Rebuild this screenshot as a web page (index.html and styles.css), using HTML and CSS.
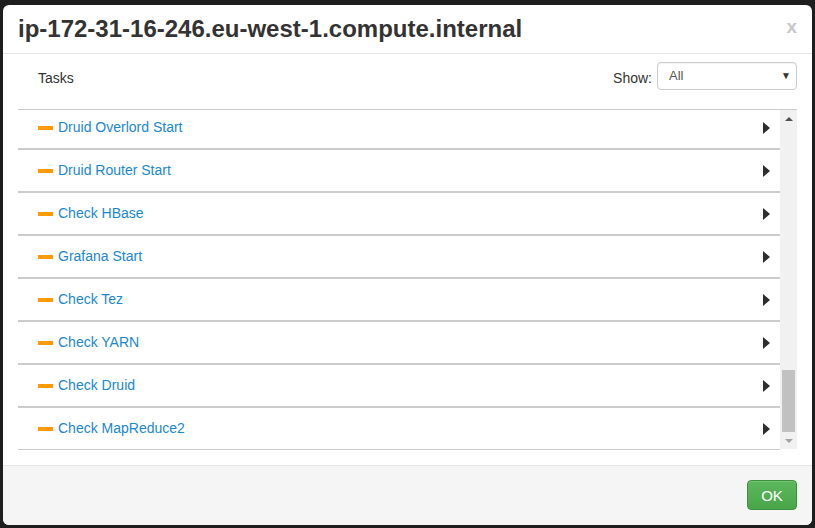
FILE: index.html
```html
<!DOCTYPE html>
<html lang="en">
<head>
<meta charset="utf-8">
<title>Host tasks</title>
<link rel="stylesheet" href="styles.css">
</head>
<body>
<div class="modal">
  <div class="modal-header">
    <h4 class="modal-title">ip-172-31-16-246.eu-west-1.compute.internal</h4>
    <span class="close">x</span>
  </div>
  <div class="modal-body">
    <div class="toolbar">
      <span class="tasks-label">Tasks</span>
      <div class="filter">
        <span class="show-label">Show:</span>
        <div class="select"><span>All</span><span class="caret">&#9660;</span></div>
      </div>
    </div>
    <div class="list-wrap">
      <div class="list">
        <div class="row"><span class="dash"></span><a class="name">Druid Overlord Start</a><span class="arrow"></span></div>
        <div class="row"><span class="dash"></span><a class="name">Druid Router Start</a><span class="arrow"></span></div>
        <div class="row"><span class="dash"></span><a class="name">Check HBase</a><span class="arrow"></span></div>
        <div class="row"><span class="dash"></span><a class="name">Grafana Start</a><span class="arrow"></span></div>
        <div class="row"><span class="dash"></span><a class="name">Check Tez</a><span class="arrow"></span></div>
        <div class="row"><span class="dash"></span><a class="name">Check YARN</a><span class="arrow"></span></div>
        <div class="row"><span class="dash"></span><a class="name">Check Druid</a><span class="arrow"></span></div>
        <div class="row"><span class="dash"></span><a class="name">Check MapReduce2</a><span class="arrow"></span></div>
      </div>
      <div class="scrollbar">
        <div class="sb-btn"><span class="sb-up"></span></div>
        <div class="sb-track"><div class="sb-thumb"></div></div>
        <div class="sb-btn"><span class="sb-down"></span></div>
      </div>
    </div>
  </div>
  <div class="modal-footer">
    <button class="btn-ok">OK</button>
  </div>
</div>
</body>
</html>
```

FILE: styles.css
```css
* { box-sizing: border-box; }
html, body { height: 100%; }
body {
  margin: 0;
  padding: 5px 3px 3px 3px;
  background: #1e1e1e;
  font-family: "Liberation Sans", Arial, sans-serif;
  font-size: 14px;
  color: #333;
}
.modal {
  background: #fff;
  border-radius: 6px;
  height: 520px;
  display: flex;
  flex-direction: column;
  overflow: hidden;
}
.modal-header {
  display: flex;
  justify-content: space-between;
  align-items: center;
  padding: 10px 15px 11px 15px;
  border-bottom: 1px solid #e5e5e5;
}
.modal-title {
  margin: 0;
  font-size: 24px;
  font-weight: bold;
  line-height: 27px;
  color: #333;
}
.close {
  font-size: 19px;
  font-weight: bold;
  color: #c8c8c8;
  line-height: 20px;
  padding-bottom: 4px;
}
.modal-body {
  flex: 1;
  padding: 8px 15px 15px 15px;
  display: flex;
  flex-direction: column;
}
.toolbar {
  display: flex;
  justify-content: space-between;
  align-items: center;
  padding: 0 0 19px 20px;
  border-bottom: 1px solid #ccc;
}
.tasks-label { font-size: 14px; padding-top: 4px; }
.filter { display: flex; align-items: center; gap: 5px; }
.show-label { font-size: 14px; padding-top: 4px; }
.select {
  width: 140px;
  height: 28px;
  border: 1px solid #ccc;
  border-radius: 4px;
  display: flex;
  justify-content: space-between;
  align-items: center;
  padding: 0 5px 2px 11px;
  color: #555;
  font-size: 13px;
  box-shadow: inset 0 1px 1px rgba(0,0,0,0.05);
}
.caret { font-size: 10px; color: #333; }
.list-wrap {
  display: flex;
  height: 340px;
}
.list {
  flex: 1;
  display: flex;
  flex-direction: column;
  justify-content: flex-end;
  overflow: hidden;
}
.row {
  flex: none;
  height: 43px;
  display: flex;
  align-items: center;
  padding: 0 10px 1px 20px;
  border-top: 1px solid #ccc;
  border-bottom: 1px solid #ccc;
}
.dash {
  width: 15px;
  height: 4px;
  background: #ff9a00;
  margin-right: 5px;
  margin-top: 1px;
}
.name {
  color: #1a87d0;
  font-size: 14px;
  flex: 1;
}
.arrow {
  width: 0;
  height: 0;
  border-left: 7px solid #2d2d2d;
  border-top: 6px solid transparent;
  border-bottom: 6px solid transparent;
  margin-top: 2px;
}
.scrollbar {
  width: 17px;
  height: 339px;
  background: #f1f1f1;
  display: flex;
  flex-direction: column;
}
.sb-btn {
  height: 17px;
  display: flex;
  align-items: center;
  justify-content: center;
}
.sb-up {
  width: 0; height: 0;
  border-left: 4px solid transparent;
  border-right: 4px solid transparent;
  border-bottom: 4px solid #505050;
}
.sb-down {
  width: 0; height: 0;
  border-left: 4px solid transparent;
  border-right: 4px solid transparent;
  border-top: 4px solid #a3a3a3;
}
.sb-track {
  flex: 1;
  display: flex;
  flex-direction: column;
  justify-content: flex-end;
  padding: 0 2px;
}
.sb-thumb {
  height: 62px;
  background: #c1c1c1;
}
.modal-footer {
  background: #f5f5f5;
  border-top: 1px solid #e5e5e5;
  padding: 14px 15px 15px 15px;
  display: flex;
  justify-content: flex-end;
}
.btn-ok {
  width: 50px;
  height: 30px;
  border: 1px solid #3e8f3e;
  border-radius: 4px;
  background: linear-gradient(#5cb85c, #48a548);
  color: #fff;
  font-family: "Liberation Sans", Arial, sans-serif;
  font-size: 15px;
  padding: 0;
  box-shadow: inset 0 1px 0 rgba(255,255,255,0.15);
}
```
